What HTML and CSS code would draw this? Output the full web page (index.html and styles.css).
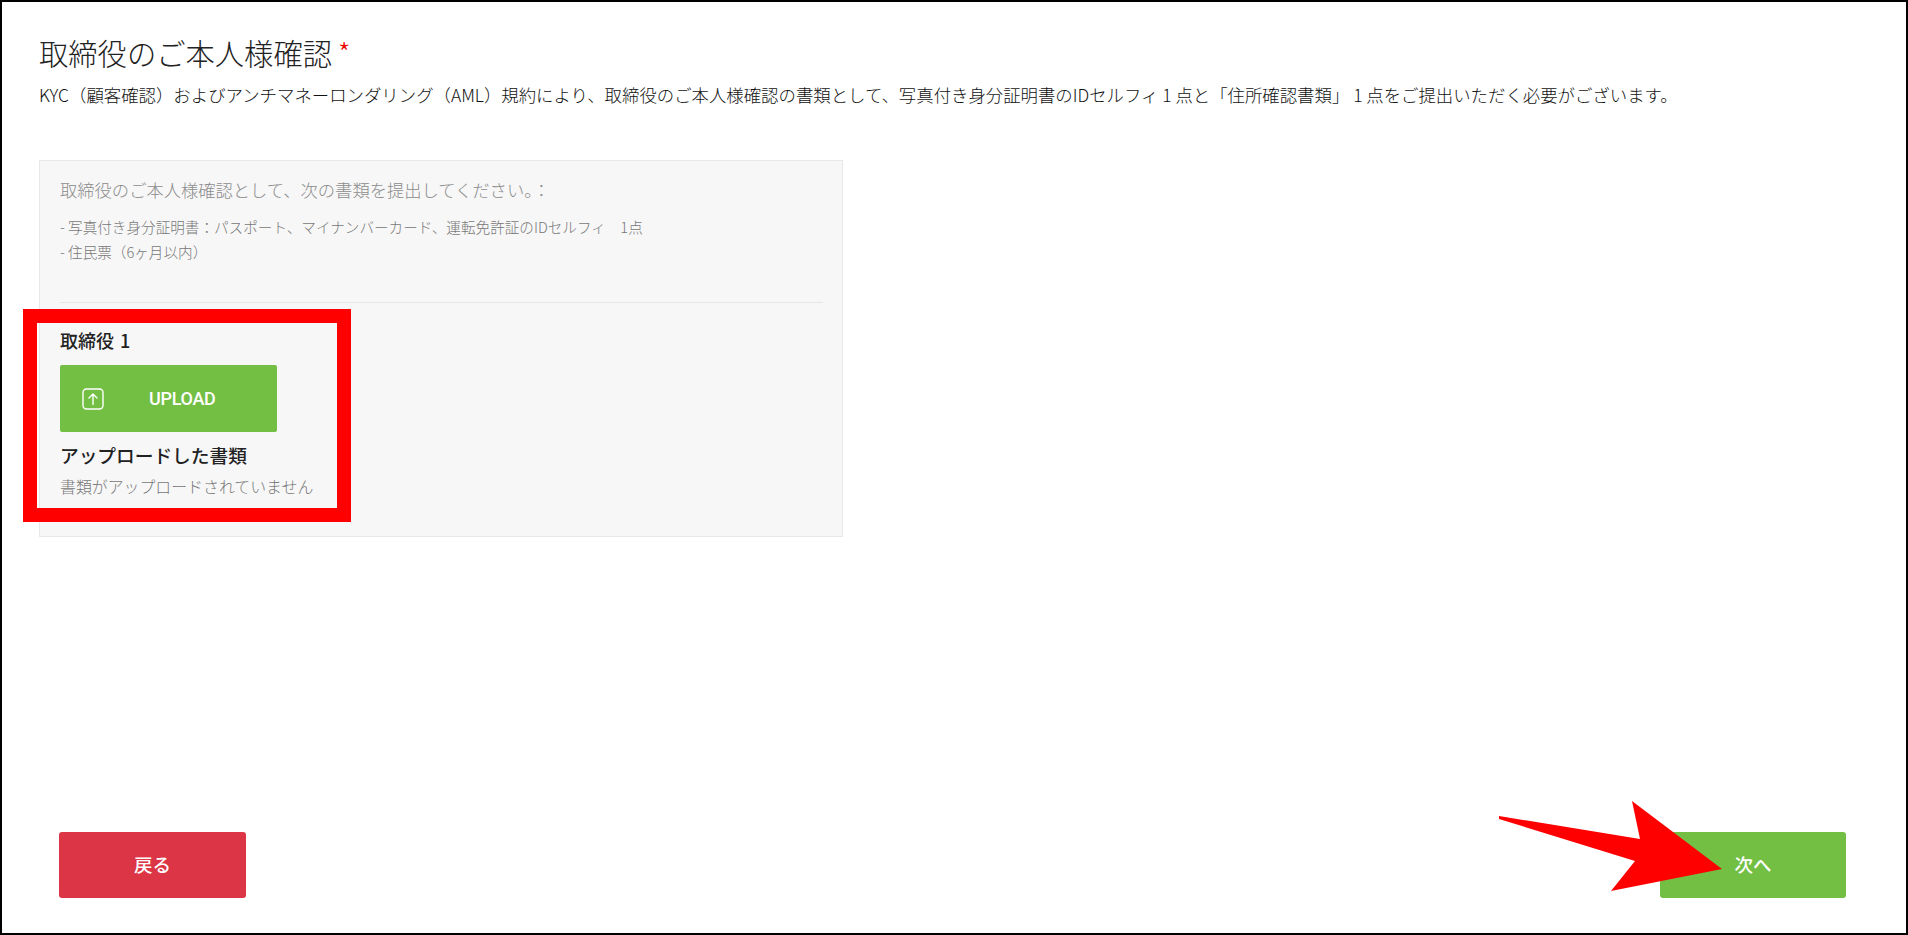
FILE: index.html
```html
<!DOCTYPE html>
<html lang="ja">
<head>
<meta charset="utf-8">
<title>取締役のご本人様確認</title>
<link rel="stylesheet" href="styles.css">
</head>
<body>
<main class="frame">
  <section class="content">
    <h1 class="title">取締役のご本人様確認<span class="req">*</span></h1>
    <p class="lead">KYC（顧客確認）およびアンチマネーロンダリング（AML）規約により、取締役のご本人様確認の書類として、写真付き身分証明書のIDセルフィ 1 点と「住所確認書類」 1 点をご提出いただく必要がございます。</p>
    <div class="panel">
      <p class="panel-head">取締役のご本人様確認として、次の書類を提出してください。：</p>
      <p class="panel-item first">- 写真付き身分証明書：パスポート、マイナンバーカード、運転免許証のIDセルフィ　1点</p>
      <p class="panel-item">- 住民票（6ヶ月以内）</p>
      <hr class="rule">
      <h2 class="director">取締役 1</h2>
      <button class="upload" type="button">
        <svg class="upload-icon" width="22" height="22" viewBox="0 0 22 22" fill="none" stroke="#fff" stroke-width="1.4" stroke-linecap="round" stroke-linejoin="round"><rect x="1" y="1" width="20" height="20" rx="3.5"/><path d="M11 16.5V6M7 10l4-4 4 4"/></svg>
        <span class="upload-label">UPLOAD</span>
      </button>
      <h3 class="docs">アップロードした書類</h3>
      <p class="none">書類がアップロードされていません</p>
    </div>
  </section>
  <footer class="actions">
    <button class="btn btn-back" type="button">戻る</button>
    <button class="btn btn-next" type="button">次へ</button>
  </footer>
  <div class="mark-box"></div>
  <svg class="mark-arrow" width="1908" height="935" viewBox="0 0 1908 935"><polygon fill="#ff0000" points="1499,816 1640,839 1632,801 1722,869 1611,891 1635,861 1499,819"/></svg>
</main>
</body>
</html>
```
FILE: styles.css
```css
* { box-sizing: border-box; }
html, body { margin: 0; padding: 0; height: 100%; }
body {
  background: #fff;
  color: #222;
  font-family: "Noto Sans CJK JP", "Noto Sans", sans-serif;
}
.frame {
  position: relative;
  width: 1908px;
  height: 935px;
  border: 2px solid #000;
  display: flex;
  flex-direction: column;
  justify-content: space-between;
  overflow: hidden;
}
.content { padding: 30px 0 0 37px; }
.title {
  margin: 0;
  font-size: 29.3px;
  line-height: 40px;
  font-weight: 300;
  color: #222;
}
.req { color: #e00; font-size: 28px; margin-left: 6px; position: relative; top: -1px; }
.lead {
  margin: 10px 0 0;
  font-size: 17.4px;
  line-height: 24px;
  font-weight: 300;
  color: #111;
  white-space: nowrap;
}
.panel {
  width: 804px;
  height: 377px;
  margin-top: 53px;
  padding: 16px 20px 0;
  background: #f7f7f7;
  border: 1px solid #e8e8e8;
}
.panel p { margin: 0; }
.panel-head { font-size: 17.3px; line-height: 26px; font-weight: 300; color: #8c8c8c; }
.panel-item { font-size: 14.6px; line-height: 24.5px; font-weight: 300; color: #777; }
.panel-item.first { margin-top: 12px; }
.rule { margin: 38px -1px 0 0; border: 0; border-top: 1px solid #e6e6e6; }
.director { margin: 25px 0 0; font-size: 18px; line-height: 24px; font-weight: 500; color: #222; word-spacing: 2px; }
.upload {
  display: flex;
  align-items: center;
  width: 217px;
  height: 67px;
  margin-top: 13px;
  padding: 0 0 0 22px;
  border: 0;
  border-radius: 2px;
  background: #72bf44;
  color: #fff;
  font: inherit;
}
.upload-label { margin-left: 45px; font-family: Roboto, "Noto Sans", sans-serif; font-size: 18px; font-weight: 500; letter-spacing: -0.3px; }
.docs { margin: 10px 0 0; font-size: 18.7px; line-height: 26px; font-weight: 500; color: #222; }
.panel .none { margin-top: 7px; font-size: 15.9px; line-height: 24px; font-weight: 300; color: #777; white-space: nowrap; }
.actions { display: flex; justify-content: space-between; padding: 0 60px 35px 57px; }
.btn {
  width: 186px;
  height: 66px;
  padding: 0 0 2px;
  border: 0;
  border-radius: 3px;
  color: #fff;
  font: inherit;
  font-size: 18.5px;
  font-weight: 500;
}
.btn-back { width: 187px; background: #dc3545; }
.btn-next { background: #72bf44; }
.mark-box {
  position: absolute;
  left: 21px;
  top: 307px;
  width: 328px;
  height: 213px;
  border: 14px solid #f00;
}
.mark-arrow { position: absolute; left: -2px; top: -2px; pointer-events: none; }
```
